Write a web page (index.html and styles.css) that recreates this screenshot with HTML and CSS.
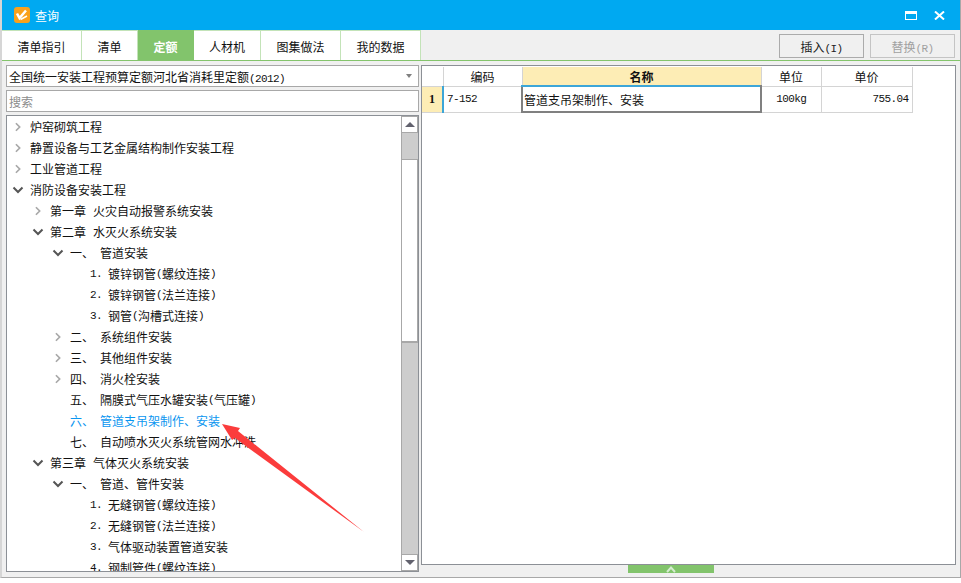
FILE: index.html
```html
<!doctype html>
<html>
	<head>
		<meta charset="utf-8" />
		<title>查询</title>
		<link rel="stylesheet" href="styles.css">
	</head>
	<body>
		<svg class="defs" width="0" height="0">
			<symbol id="right" viewBox="0 0 10 12"><path d="M2.5 1.5 7 6 2.5 10.500" fill="none" stroke="currentColor" stroke-width="2"/></symbol>
			<symbol id="down" viewBox="0 0 12 10"><path d="M1.500 2.500 6 7 10.500 2.500" fill="none" stroke="currentColor" stroke-width="2"/></symbol>
		</svg>

		<div class="window">
			<header class="titlebar">
				<svg class="logo" viewBox="0 0 16 16">
					<rect width="16" height="16" rx="3" fill="#f9a11b"/>
					<path d="M3 6.500 5.500 11 12 3.500" fill="none" stroke="#fff" stroke-width="2.500"/>
					<path d="M6.500 12.500 13 9" stroke="#fff" stroke-width="1.500"/>
				</svg>
				<span class="title">查询</span>
				<span class="winbtn"><i class="maximize"></i></span>
				<span class="winbtn">
					<svg class="close" viewBox="0 0 11 9"><path d="M1 .5 10 8.500M10 .5 1 8.500" stroke="#fff" stroke-width="2"/></svg>
				</span>
			</header>

			<nav class="toolbar">
				<div class="tabs">
					<a class="tab w80">清单指引</a>
					<a class="tab w56">清单</a>
					<a class="tab w56 active">定额</a>
					<a class="tab w67">人材机</a>
					<a class="tab w80">图集做法</a>
					<a class="tab w80">我的数据</a>
				</div>
				<div class="actions">
					<button class="btn">插入<span class="num">(I)</span></button>
					<button class="btn disabled">替换<span class="num">(R)</span></button>
				</div>
			</nav>

			<main class="content">
				<section class="left">
					<div class="combo">
						<span>全国统一安装工程预算定额河北省消耗里定额<span class="num">(2012)</span></span>
						<i class="caret"></i>
					</div>
					<div class="search">搜索</div>
					<div class="tree">
						<ul class="rows">
							<li class="row l0"><svg class="chev closed"><use href="#right"/></svg>炉窑砌筑工程</li>
							<li class="row l0"><svg class="chev closed"><use href="#right"/></svg>静置设备与工艺金属结构制作安装工程</li>
							<li class="row l0"><svg class="chev closed"><use href="#right"/></svg>工业管道工程</li>
							<li class="row l0"><svg class="chev"><use href="#down"/></svg>消防设备安装工程</li>
							<li class="row l1"><svg class="chev closed"><use href="#right"/></svg><b class="no">第一章</b>火灾自动报警系统安装</li>
							<li class="row l1"><svg class="chev"><use href="#down"/></svg><b class="no">第二章</b>水灭火系统安装</li>
							<li class="row l2"><svg class="chev"><use href="#down"/></svg><b class="no">一、</b>管道安装</li>
							<li class="row l3"><b class="no num">1.</b>镀锌钢管<span class="num">(</span>螺纹连接<span class="num">)</span></li>
							<li class="row l3"><b class="no num">2.</b>镀锌钢管<span class="num">(</span>法兰连接<span class="num">)</span></li>
							<li class="row l3"><b class="no num">3.</b>钢管<span class="num">(</span>沟槽式连接<span class="num">)</span></li>
							<li class="row l2"><svg class="chev closed"><use href="#right"/></svg><b class="no">二、</b>系统组件安装</li>
							<li class="row l2"><svg class="chev closed"><use href="#right"/></svg><b class="no">三、</b>其他组件安装</li>
							<li class="row l2"><svg class="chev closed"><use href="#right"/></svg><b class="no">四、</b>消火栓安装</li>
							<li class="row l2 leaf"><b class="no">五、</b>隔膜式气压水罐安装<span class="num">(</span>气压罐<span class="num">)</span></li>
							<li class="row l2 leaf current"><b class="no">六、</b>管道支吊架制作、安装</li>
							<li class="row l2 leaf"><b class="no">七、</b>自动喷水灭火系统管网水冲洗</li>
							<li class="row l1"><svg class="chev"><use href="#down"/></svg><b class="no">第三章</b>气体灭火系统安装</li>
							<li class="row l2"><svg class="chev"><use href="#down"/></svg><b class="no">一、</b>管道、管件安装</li>
							<li class="row l3"><b class="no num">1.</b>无缝钢管<span class="num">(</span>螺纹连接<span class="num">)</span></li>
							<li class="row l3"><b class="no num">2.</b>无缝钢管<span class="num">(</span>法兰连接<span class="num">)</span></li>
							<li class="row l3"><b class="no num">3.</b>气体驱动装置管道安装</li>
							<li class="row l3"><b class="no num">4.</b>钢制管件<span class="num">(</span>螺纹连接<span class="num">)</span></li>
						</ul>
						<div class="scrollbar">
							<div class="sbtn"><i class="up"></i></div>
							<div class="track"><div class="thumb"></div></div>
							<div class="sbtn"><i class="dn"></i></div>
						</div>
					</div>
				</section>

				<section class="right">
					<div class="grid">
						<table>
							<tr class="head">
								<th class="c0"></th>
								<th class="c1">编码</th>
								<th class="c2 sel">名称</th>
								<th class="c3">单位</th>
								<th class="c4">单价</th>
							</tr>
							<tr class="data">
								<td class="rowno">1</td>
								<td class="code num">7-152</td>
								<td class="name">管道支吊架制作、安装</td>
								<td class="unit num">100kg</td>
								<td class="price num">755.04</td>
							</tr>
						</table>
					</div>
					<div class="handle"><svg viewBox="0 0 10 7"><path d="M1 6.500 5 2 9 6.500" fill="none" stroke="#d5ecd0" stroke-width="2"/></svg></div>
				</section>
			</main>
		</div>

		<svg class="arrow" viewBox="0 0 961 583">
			<polygon points="222,424 240,428 238,431 364,532 243,444 235,438 232,440" fill="#fb3c3c"/>
		</svg>
	</body>
</html>
```

FILE: styles.css
```css
* {
	box-sizing: border-box;
}

body {
	margin: 0;
	background: #fff;
	font: 12px "Noto Sans CJK SC", sans-serif;
	color: #111;
}

.defs {
	display: block;
}

.num {
	font-family: "Liberation Mono", monospace;
	font-size: 11px;
	letter-spacing: -.6px;
}

.window {
	height: 578px;
	display: flex;
	flex-direction: column;
	background: #f0f0f0;
	border-left: 2px solid #d6d6d6;
	border-right: 1px solid #a8a8a8;
	border-bottom: 1px solid #a8a8a8;
}

.titlebar {
	height: 30px;
	flex: none;
	display: flex;
	align-items: center;
	padding: 0 6px 0 12px;
	background: #00a9f1;
	color: #fff;
}

.logo {
	width: 16px;
	height: 16px;
}

.title {
	margin-left: 5px;
	flex: 1;
	font-size: 12px;
}

.winbtn {
	width: 29px;
	display: flex;
	justify-content: center;
}

.maximize {
	width: 12px;
	height: 9px;
	border: 1px solid #fff;
	border-top-width: 3px;
}

.close {
	width: 11px;
	height: 9px;
}

.toolbar {
	height: 31px;
	flex: none;
	display: flex;
	justify-content: space-between;
	padding-right: 5px;
	border-bottom: 1px solid #84c46c;
}

.tabs {
	display: flex;
}

.tab {
	display: flex;
	align-items: center;
	justify-content: center;
	padding-top: 2px;
	background: #fff;
	border-right: 1px solid #c3e3b8;
	border-top: 1px solid #c3e3b8;
}

.w80 {
	width: 80px;
}

.w56 {
	width: 56px;
}

.w67 {
	width: 67px;
}

.active {
	background: #82c46c;
	border-color: #82c46c;
	color: #fff;
	font-weight: 700;
}

.actions {
	display: flex;
	gap: 6px;
	padding-top: 4px;
}

.btn {
	width: 85px;
	height: 24px;
	padding: 0;
	background: #f0f0f0;
	border: 1px solid #ababab;
	font: inherit;
	color: #222;
}

.disabled {
	border-color: #c4c4c4;
	color: #a0a0a0;
}

.content {
	flex: 1;
	min-height: 0;
	display: flex;
	gap: 2px;
	padding: 4px 4px 0;
}

.left {
	width: 413px;
	flex: none;
	display: flex;
	flex-direction: column;
	gap: 3px;
	padding-bottom: 5px;
}

.combo, .search {
	height: 22px;
	flex: none;
	display: flex;
	align-items: center;
	padding-left: 2px;
	background: #fff;
	border: 1px solid #a8a8a8;
}

.combo {
	justify-content: space-between;
	padding-right: 6px;
}

.caret {
	border: 3px solid transparent;
	border-top: 4px solid #808080;
	border-bottom: 0;
}

.search {
	color: #8c8c8c;
}

.tree {
	flex: 1;
	min-height: 0;
	display: flex;
	background: #fff;
	border: 1px solid #8c9096;
	overflow: hidden;
}

.rows {
	flex: 1;
	margin: 0;
	padding: 0;
	list-style: none;
	overflow: hidden;
}

.row {
	height: 21px;
	display: flex;
	align-items: center;
	white-space: nowrap;
}

.l0 {
	padding-left: 5px;
}

.l1 {
	padding-left: 25px;
}

.l2 {
	padding-left: 45px;
}

.l3 {
	padding-left: 83px;
}

.leaf {
	padding-left: 63px;
}

.chev {
	width: 12px;
	height: 10px;
	margin-right: 6px;
	color: #555;
	flex: none;
}

.closed {
	color: #a8a8a8;
}

.no {
	font-weight: 400;
	flex: none;
}

.l1 .no {
	width: 43px;
}

.l2 .no {
	width: 30px;
}

.l3 .no {
	width: 18px;
}

.current {
	color: #0a96f0;
}

.scrollbar {
	width: 17px;
	flex: none;
	display: flex;
	flex-direction: column;
	background: #cdcdcd;
	border-left: 1px solid #a8a8a8;
}

.sbtn {
	height: 17px;
	flex: none;
	display: flex;
	align-items: center;
	justify-content: center;
	background: #fff;
	border: 1px solid #a8a8a8;
	border-left: 0;
}

.up {
	border: 5px solid transparent;
	border-top: 0;
	border-bottom: 5px solid #62626e;
}

.dn {
	border: 5px solid transparent;
	border-bottom: 0;
	border-top: 5px solid #62626e;
}

.track {
	flex: 1;
	padding-top: 26px;
}

.thumb {
	height: 184px;
	background: #fff;
	border: 1px solid #a8a8a8;
	border-left: 0;
	border-bottom-width: 2px;
}

.right {
	flex: 1;
	min-width: 0;
	display: flex;
	flex-direction: column;
}

.grid {
	height: 500px;
	flex: none;
	padding-top: 1px;
	background: #fff;
	border: 1px solid #8c9096;
}

table {
	border-collapse: collapse;
	table-layout: fixed;
	width: 490px;
}

th, td {
	padding: 0;
	border: 1px solid #d4d4d4;
	text-align: center;
	font-weight: 400;
}

.head {
	height: 19px;
}

.data {
	height: 26px;
}

th {
	border-top: 0;
}

.c0, .rowno {
	border-left: 0;
}

.c0 {
	width: 21px;
}

.c1 {
	width: 79px;
}

.c2 {
	width: 239px;
}

.c3 {
	width: 60px;
}

.c4 {
	width: 91px;
}

.sel {
	background: #fdedb5;
	font-weight: 700;
}

.rowno {
	background: #fdedb5;
	font: 700 12px "Liberation Serif", serif;
	letter-spacing: 0;
}

.code {
	text-align: left;
	padding-left: 3px;
	border-left: 2px solid #3ca6d8;
}

.name {
	text-align: left;
	padding-left: 1px;
	border: 2px solid #808080;
	border-top: 2px solid #3ca6d8;
}

.price {
	text-align: right;
	padding-right: 3px;
}

.handle {
	width: 86px;
	height: 8px;
	margin-left: 207px;
	display: flex;
	justify-content: center;
	background: #82c46c;
}

.handle svg {
	width: 10px;
	height: 8px;
}

.arrow {
	position: absolute;
	left: 0;
	top: 0;
	width: 961px;
	height: 583px;
	pointer-events: none;
}
```
